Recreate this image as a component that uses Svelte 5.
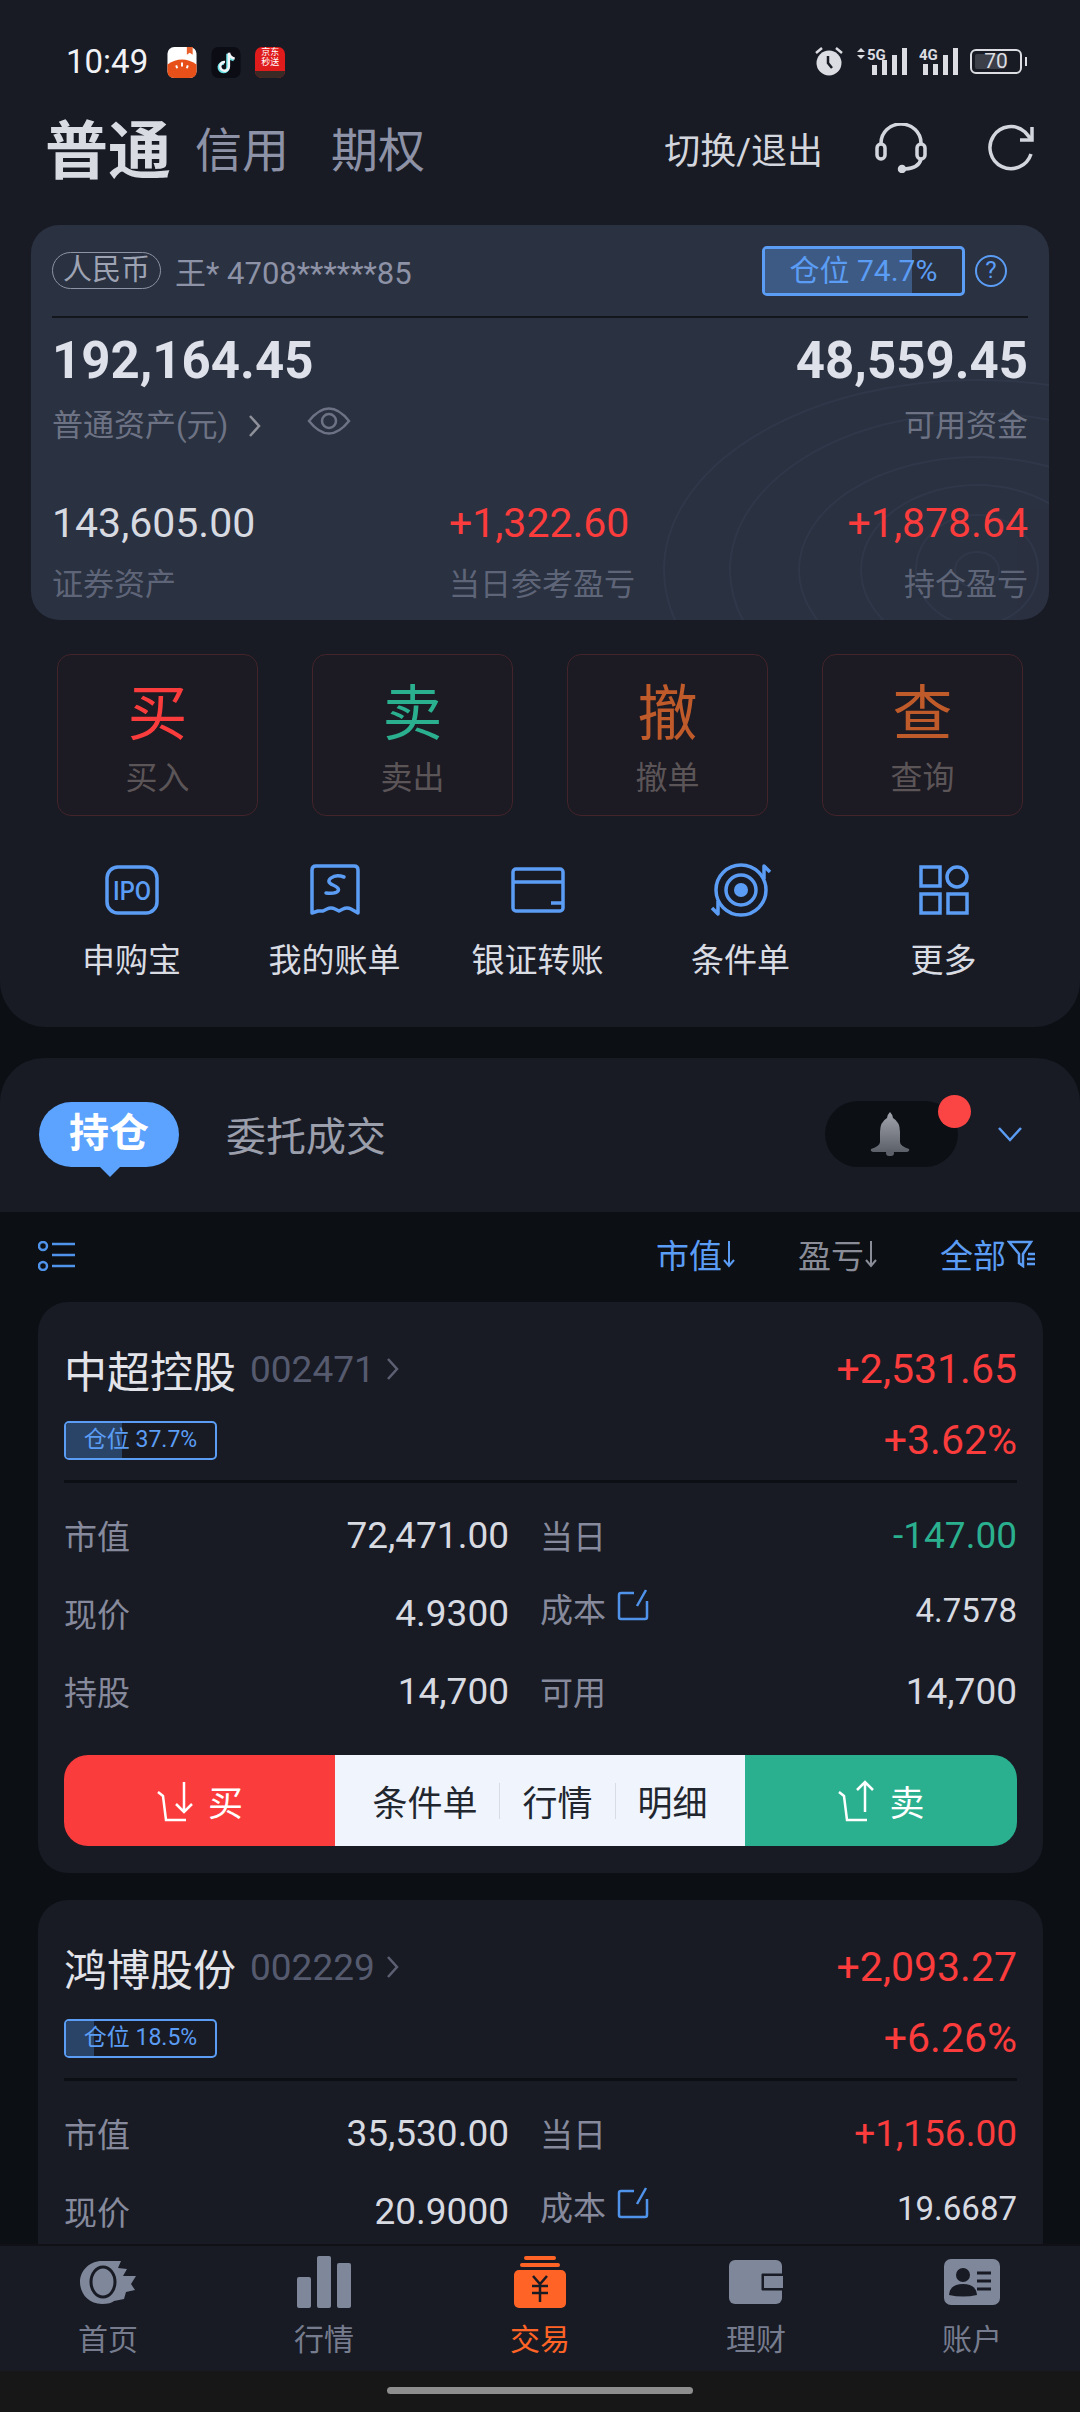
<script>
  const trades = [
    { big: '买', small: '买入', cls: 'buy' },
    { big: '卖', small: '卖出', cls: 'sell' },
    { big: '撤', small: '撤单', cls: 'undo' },
    { big: '查', small: '查询', cls: 'undo' }
  ];

  const shortcuts = ['申购宝', '我的账单', '银证转账', '条件单', '更多'];

  // the second card runs under the tab bar, so only its top rows are filled in
  const stocks = [
    {
      name: '中超控股', code: '002471', share: 37.7, profit: '+2,531.65', pct: '+3.62%',
      cap: '72,471.00', today: '-147.00', todayDown: true, price: '4.9300', cost: '4.7578', held: '14,700', free: '14,700'
    },
    {
      name: '鸿博股份', code: '002229', share: 18.5, profit: '+2,093.27', pct: '+6.26%',
      cap: '35,530.00', today: '+1,156.00', todayDown: false, price: '20.9000', cost: '19.6687'
    }
  ];

  const tabs = ['首页', '行情', '交易', '理财', '账户'];
</script>

<div class="page">
  <div class="scroll">
    <section class="top">
      <div class="status">
        <span class="time">10:49</span>
        <div class="apps">
          <svg width="30" height="31" viewBox="0 0 30 32">
            <rect width="30" height="32" rx="7" fill="#fff" />
            <path d="M20 0h6v8l-3-2-3 2z" fill="#e8602c" />
            <path d="M0 18q15-10 30 0v7q0 7-7 7H7q-7 0-7-7z" fill="#e8501a" />
            <path d="M15 16v4M9 19l1 3M21 19l-1 3" stroke="#fff" stroke-width="2" />
          </svg>
          <svg width="30" height="31" viewBox="0 0 30 32">
            <rect width="30" height="32" rx="7" fill="#0b0c14" />
            <path d="M17 7v14a4.500 4.500 0 1 1-4-4.500M17 7q1 5 6 6" fill="none" stroke="#6ce4e8" stroke-width="3.500" />
            <path d="M18 6v14a4.500 4.500 0 1 1-4-4.500M18 6q1 5 6 6" fill="none" stroke="#f4f4f6" stroke-width="2.500" />
          </svg>
          <div class="jd"><span>京东</span><span>秒送</span><i></i></div>
        </div>
        <div class="status-right">
          <svg width="32" height="30" viewBox="0 0 32 30">
            <circle cx="16" cy="17" r="12.500" fill="#dcdde2" />
            <path d="M15 10v7l4 5" fill="none" stroke="#181b24" stroke-width="2.500" />
            <path d="M3 7l6-5M29 7l-6-5" stroke="#dcdde2" stroke-width="2.500" />
          </svg>
          <svg width="52" height="30" viewBox="0 0 52 30" class="sig">
            <path d="M1 6l4-4 4 4zM1 9l4 4 4-4z" fill="#dcdde2" />
            <text x="11" y="14" font-size="15" font-weight="700" fill="#dcdde2">5G</text>
            <path d="M16 19h5v10h-5zM26 14h5v15h-5zM36 9h5v20h-5zM46 2h5v27h-5z" fill="#dcdde2" />
          </svg>
          <svg width="40" height="30" viewBox="0 0 40 30" class="sig">
            <text x="0" y="14" font-size="15" font-weight="700" fill="#dcdde2">4G</text>
            <path d="M4 18h5v11H4zM14 18h5v11h-5zM24 9h5v20h-5zM34 2h5v27h-5z" fill="#dcdde2" />
          </svg>
          <div class="battery"><b style="width: 62%"></b><span>70</span></div>
        </div>
      </div>

      <div class="nav">
        <span class="nav-main">普通</span>
        <span class="nav-sub">信用</span>
        <span class="nav-sub">期权</span>
        <span class="nav-switch">切换/退出</span>
        <svg class="headset" width="52" height="50" viewBox="0 0 52 50" fill="none" stroke="#d4d6de" stroke-width="3.500">
          <path d="M6 22V20a20 19 0 0 1 40 0v2" />
          <rect x="2" y="21" width="8" height="15" rx="4" />
          <rect x="42" y="21" width="8" height="15" rx="4" />
          <path d="M46 36q-2 9-16 10" />
          <circle cx="27" cy="46" r="2.500" fill="#d4d6de" />
        </svg>
        <svg width="48" height="48" viewBox="0 0 48 48" fill="none" stroke="#d4d6de" stroke-width="3.500">
          <path d="M44 30A21 21 0 1 1 38 8l6 7" />
          <path d="M45 3v13H33" />
        </svg>
      </div>

      <div class="account">
        <svg class="rings" width="1018" height="395" viewBox="0 0 1018 395" fill="none" stroke="#343e53" stroke-width="2">
          <ellipse cx="946" cy="345" rx="22" ry="18" />
          <ellipse cx="946" cy="345" rx="61" ry="55" />
          <ellipse cx="946" cy="345" rx="116" ry="85" />
          <ellipse cx="946" cy="345" rx="178" ry="113" />
          <ellipse cx="946" cy="345" rx="247" ry="157" />
          <ellipse cx="946" cy="345" rx="313" ry="190" />
        </svg>
        <div class="acct-head">
          <span class="rmb">人民币</span>
          <span class="acct-no">王* 4708******85</span>
          <div class="share-box"><b style="width: 74.7%"></b><span>仓位 74.7%</span></div>
          <span class="help">?</span>
        </div>
        <div class="acct-main">
          <div>
            <div class="big-num">192,164.45</div>
            <div class="acct-label with-icons">
              普通资产(元)
              <svg width="14" height="24" viewBox="0 0 14 24" fill="none" stroke="#8f919a" stroke-width="2.500"><path d="M2 2l9 10-9 10" /></svg>
              <svg class="eye" width="44" height="34" viewBox="0 0 44 34" fill="none" stroke="#6d7384" stroke-width="2.500">
                <path d="M2 17Q22-8 42 17 22 42 2 17z" />
                <circle cx="22" cy="17" r="7" />
              </svg>
            </div>
          </div>
          <div class="right">
            <div class="big-num">48,559.45</div>
            <div class="acct-label">可用资金</div>
          </div>
        </div>
        <div class="acct-sub">
          <div>
            <div class="mid-num">143,605.00</div>
            <div class="acct-label">证券资产</div>
          </div>
          <div>
            <div class="mid-num up">+1,322.60</div>
            <div class="acct-label">当日参考盈亏</div>
          </div>
          <div class="right">
            <div class="mid-num up">+1,878.64</div>
            <div class="acct-label">持仓盈亏</div>
          </div>
        </div>
      </div>

      <div class="trades">
        {#each trades as t}
          <div class="trade">
            <span class="trade-big {t.cls}">{t.big}</span>
            <span class="trade-small">{t.small}</span>
          </div>
        {/each}
      </div>

      <div class="shortcuts">
        {#each shortcuts as label, i}
          <div class="shortcut">
            <div class="shortcut-icon">
              {#if i === 0}
                <svg width="54" height="50" viewBox="0 0 54 50">
                  <rect x="2" y="2" width="50" height="46" rx="11" fill="none" stroke="#5b9df5" stroke-width="3.500" />
                  <text x="27" y="35" text-anchor="middle" font-size="26" font-weight="500" fill="#5b9df5" class="icon-text" textLength="38" lengthAdjust="spacingAndGlyphs">IPO</text>
                </svg>
              {:else if i === 1}
                <svg width="50" height="52" viewBox="0 0 50 52">
                  <path d="M2 49V6q0-4 4-4h38q4 0 4 4v43l-7-4q-4-2-8 0l-4 2-4-2q-4-2-8 0l-4 2-5 0z" fill="none" stroke="#5b9df5" stroke-width="3.500" stroke-linejoin="round" />
                  <path d="M34 13q-8-3-13 1t2 7 5 6-12 2" fill="none" stroke="#5b9df5" stroke-width="3.500" stroke-linecap="round" />
                </svg>
              {:else if i === 2}
                <svg width="54" height="46" viewBox="0 0 54 46" fill="none" stroke="#5b9df5" stroke-width="3.500">
                  <rect x="2" y="2" width="50" height="42" rx="3" />
                  <path d="M2 15h50M40 36h12" />
                </svg>
              {:else if i === 3}
                <svg width="62" height="54" viewBox="0 0 62 54" fill="none" stroke="#5b9df5" stroke-width="3.500">
                  <circle cx="31" cy="27" r="25" />
                  <circle cx="31" cy="27" r="15" />
                  <circle cx="31" cy="27" r="7" fill="#5b9df5" stroke="none" />
                  <path d="M54 16V3l6 6M8 38v13l-6-6" stroke-linejoin="round" />
                </svg>
              {:else}
                <svg width="50" height="50" viewBox="0 0 50 50" fill="none" stroke="#5b9df5" stroke-width="3.500">
                  <rect x="2" y="2" width="19" height="19" />
                  <circle cx="38" cy="12" r="10" />
                  <rect x="2" y="29" width="19" height="19" />
                  <rect x="29" y="29" width="19" height="19" />
                </svg>
              {/if}
            </div>
            <span>{label}</span>
          </div>
        {/each}
      </div>
    </section>

    <section class="holdings-head">
      <div class="pill">持仓</div>
      <span class="orders">委托成交</span>
      <div class="bell">
        <svg width="42" height="44" viewBox="0 0 42 44">
          <defs>
            <linearGradient id="bellfill" x1="0" y1="0" x2="0" y2="1">
              <stop offset="0" stop-color="#a2a5ad" />
              <stop offset="1" stop-color="#5c6069" />
            </linearGradient>
          </defs>
          <path d="M21 0q3 3 3 6 7 4 7 14v10q0 4 9 7 1 2-2 3H4q-3-1-2-3 9-3 9-7V20q0-10 7-14 0-3 3-6z" fill="url(#bellfill)" />
          <rect x="17" y="38" width="8" height="6" rx="3" fill="#5c6069" />
        </svg>
        <i></i>
      </div>
      <svg class="chev" width="26" height="16" viewBox="0 0 26 16" fill="none" stroke="#5b9df5" stroke-width="2.500"><path d="M2 2l11 12L24 2" /></svg>
    </section>

    <div class="toolbar">
      <svg class="list-icon" width="38" height="30" viewBox="0 0 38 30" fill="none" stroke="#4f93ea" stroke-width="2.500">
        <circle cx="5" cy="5" r="4" />
        <circle cx="5" cy="25" r="4" />
        <path d="M14 3h23M14 14h23M14 25h23" />
      </svg>
      <span class="sort blue first">市值<svg width="12" height="28" viewBox="0 0 12 28" fill="none" stroke="currentColor" stroke-width="2"><path d="M6 1v25M1 20l5 6 5-6" /></svg></span>
      <span class="sort">盈亏<svg width="12" height="28" viewBox="0 0 12 28" fill="none" stroke="currentColor" stroke-width="2"><path d="M6 1v25M1 20l5 6 5-6" /></svg></span>
      <span class="sort blue">全部<svg width="30" height="28" viewBox="0 0 30 28" fill="none" stroke="currentColor" stroke-width="2.500"><path d="M2 2h22l-8 12v12l-4-3v-9zM21 14h7M20 19h8M20 24h8" /></svg></span>
    </div>

    {#each stocks as s}
      <article class="stock">
        <div class="stock-top">
          <div class="stock-name">
            <span class="name">{s.name}</span>
            <span class="code">{s.code}</span>
            <svg width="14" height="24" viewBox="0 0 14 24" fill="none" stroke="#5c6072" stroke-width="2.500"><path d="M2 2l9 10-9 10" /></svg>
          </div>
          <span class="stock-pnl">{s.profit}</span>
        </div>
        <div class="stock-second">
          <div class="share-tag"><b style="width: {s.share}%"></b><span>仓位 {s.share}%</span></div>
          <span class="stock-pnl">{s.pct}</span>
        </div>
        <div class="stock-line"></div>
        <div class="stats">
          <div class="stat"><span>市值</span><strong>{s.cap}</strong></div>
          <div class="stat"><span>当日</span><strong class:down={s.todayDown} class:up={!s.todayDown}>{s.today}</strong></div>
          <div class="stat"><span>现价</span><strong>{s.price}</strong></div>
          <div class="stat cost">
            <span>成本
              <svg width="32" height="32" viewBox="0 0 32 32" fill="none" stroke="#4f93ea" stroke-width="2.500"><path d="M17 4H4q-2 0-2 2v22q0 2 2 2h24q2 0 2-2V12M29 1l-9 16" /></svg>
            </span>
            <strong>{s.cost}</strong>
          </div>
          {#if s.held}
            <div class="stat"><span>持股</span><strong>{s.held}</strong></div>
            <div class="stat"><span>可用</span><strong>{s.free}</strong></div>
          {/if}
        </div>
        {#if s.held}
          <div class="actions">
            <div class="act act-buy">
              <svg width="48" height="42" viewBox="0 0 48 42" fill="none" stroke="#fff" stroke-width="2.500"><path d="M2 12l5 4 3 24h20M28 2v30M20 24l8 8 8-8" /></svg>
              买
            </div>
            <div class="act-mid">
              <span>条件单</span><i></i><span>行情</span><i></i><span>明细</span>
            </div>
            <div class="act act-sell">
              <svg width="48" height="42" viewBox="0 0 48 42" fill="none" stroke="#fff" stroke-width="2.500"><path d="M2 12l5 4 3 24h20M28 32V2M20 10l8-8 8 8" /></svg>
              卖
            </div>
          </div>
        {/if}
      </article>
    {/each}
  </div>

  <nav class="tabs">
    {#each tabs as tab, i}
      <div class="tab" class:active={i === 2}>
        <div class="tab-icon">
          {#if i === 0}
            <svg width="56" height="44" viewBox="0 0 56 44">
              <path d="M22 1h19l-3 7 9 1-4 7h13l-5 8 4 6-9 2-2 7-10 2q-3 3-12 3C8 44 0 33 0 22S9 1 22 1z" fill="#7f879a" />
              <ellipse cx="23" cy="22" rx="12" ry="15" fill="#7f879a" stroke="#181b24" stroke-width="3" />
            </svg>
          {:else if i === 1}
            <svg width="54" height="52" viewBox="0 0 54 52" fill="#7f879a">
              <rect x="0" y="21" width="14" height="31" rx="2" />
              <rect x="20" y="0" width="14" height="52" rx="2" />
              <rect x="40" y="7" width="14" height="45" rx="2" />
            </svg>
          {:else if i === 2}
            <svg width="52" height="52" viewBox="0 0 52 52">
              <rect x="10" y="0" width="32" height="4" rx="2" fill="#ff6426" />
              <rect x="6" y="7" width="40" height="4" rx="2" fill="#ff6426" />
              <rect x="0" y="14" width="52" height="38" rx="5" fill="#ff6426" />
              <path d="M19 20l7 8 7-8M26 28v18M18 30h16M18 37h16" fill="none" stroke="#181b24" stroke-width="2.500" />
            </svg>
          {:else if i === 3}
            <svg width="54" height="44" viewBox="0 0 54 44">
              <rect x="0" y="0" width="53" height="44" rx="6" fill="#7f879a" />
              <path d="M54 14H33v16h21" fill="#181b24" stroke="#181b24" />
              <rect x="35" y="16" width="19" height="12" fill="#7f879a" />
            </svg>
          {:else}
            <svg width="56" height="46" viewBox="0 0 56 46">
              <rect width="56" height="46" rx="7" fill="#7f879a" />
              <circle cx="19" cy="16" r="7" fill="#181b24" />
              <path d="M5 36q1-11 14-11t14 11q-14 3-28 0z" fill="#181b24" />
              <path d="M33 14h14M33 22h14M33 30h14" stroke="#181b24" stroke-width="3" />
            </svg>
          {/if}
        </div>
        <span>{tab}</span>
      </div>
    {/each}
  </nav>
  <div class="home-bar"><i></i></div>
</div>

<style>
  :global(body) {
    background: #0c0f14;
  }

  .page {
    width: 1080px;
    height: 2412px;
    display: flex;
    flex-direction: column;
    overflow: hidden;
    background: #0c0f14;
    font-family: Roboto, "Noto Sans CJK SC", sans-serif;
    color: #d8dae2;
  }

  .scroll {
    flex: 1;
    min-height: 0;
    overflow: hidden;
  }

  .right {
    text-align: right;
  }

  .up {
    color: #fb3c3c;
  }

  .down {
    color: #2bb08f;
  }

  /* top panel */
  .top {
    height: 1027px;
    box-sizing: border-box;
    background: #181b24;
    border-radius: 0 0 46px 46px;
  }

  .status {
    height: 100px;
    padding: 42px 54px 0 66px;
    box-sizing: border-box;
    display: flex;
    align-items: flex-start;
  }

  .time {
    font-size: 33px;
    line-height: 36px;
    margin-top: 2px;
    color: #f1f2f5;
  }

  .apps {
    display: flex;
    gap: 14px;
    margin-left: 19px;
    margin-top: 5px;
  }

  .jd {
    width: 30px;
    height: 31px;
    border-radius: 7px;
    background: #e01b1b;
    color: #fff;
    font-size: 9px;
    line-height: 10px;
    text-align: center;
    overflow: hidden;
    position: relative;
  }

  .jd span {
    display: block;
  }

  .jd i {
    position: absolute;
    left: 0;
    right: 0;
    bottom: 0;
    height: 7px;
    background: #3a2a26;
  }

  .status-right {
    margin-left: auto;
    display: flex;
    align-items: center;
    gap: 11px;
    margin-top: 4px;
  }

  .sig text {
    font-family: Roboto, sans-serif;
  }

  .battery {
    width: 52px;
    height: 25px;
    box-sizing: border-box;
    border: 2px solid #dcdde2;
    border-radius: 6px;
    position: relative;
    margin-right: 4px;
  }

  .battery::after {
    content: "";
    position: absolute;
    right: -7px;
    top: 6px;
    width: 2px;
    height: 9px;
    background: #dcdde2;
  }

  .battery b {
    position: absolute;
    left: 3px;
    top: 3px;
    bottom: 3px;
    background: #3c3f48;
    border-radius: 2px;
  }

  .battery span {
    position: absolute;
    left: 0;
    right: 0;
    top: 0;
    text-align: center;
    font-size: 21px;
    line-height: 21px;
    color: #dcdde2;
  }

  .nav {
    height: 95px;
    padding: 0 45px;
    display: flex;
    align-items: center;
  }

  .nav-main {
    font-size: 63px;
    font-weight: 700;
    color: #d9dbe3;
    margin-right: 24px;
    margin-top: -4px;
  }

  .nav-sub {
    font-size: 47px;
    color: #8d92a6;
    margin-right: 42px;
    margin-top: -2px;
  }

  .nav-switch {
    margin-left: auto;
    font-size: 36px;
    color: #d4d6de;
  }

  .headset {
    margin: 0 60px 0 52px;
  }

  /* account card */
  .account {
    position: relative;
    overflow: hidden;
    margin: 30px 31px 0;
    height: 395px;
    padding: 0 21px;
    box-sizing: border-box;
    background: #2a3140;
    border-radius: 28px;
  }

  .rings {
    position: absolute;
    left: 0;
    top: 0;
    opacity: 0.5;
  }

  .acct-head {
    position: relative;
    height: 91px;
    display: flex;
    align-items: center;
    border-bottom: 2px solid #14161d;
  }

  .rmb {
    height: 37px;
    width: 109px;
    box-sizing: border-box;
    border: 1.500px solid #8e93a5;
    border-radius: 20px;
    font-size: 29px;
    line-height: 34px;
    text-align: center;
    color: #9ea3b4;
  }

  .acct-no {
    margin-left: 14px;
    font-size: 31px;
    color: #8d92a6;
  }

  .share-box {
    position: relative;
    margin-left: auto;
    width: 203px;
    height: 50px;
    box-sizing: border-box;
    border: 3px solid #5b9df5;
    border-radius: 5px;
    overflow: hidden;
    text-align: center;
    font-size: 30px;
    line-height: 44px;
    color: #5b9df5;
  }

  .share-box b,
  .share-tag b {
    position: absolute;
    left: 0;
    top: 0;
    bottom: 0;
    background: #3d5a84;
  }

  .share-box span,
  .share-tag span {
    position: relative;
  }

  .help {
    width: 32px;
    height: 32px;
    box-sizing: border-box;
    margin-left: 10px;
    margin-right: 21px;
    border: 2.500px solid #5b9df5;
    border-radius: 50%;
    font-size: 24px;
    line-height: 27px;
    text-align: center;
    color: #5b9df5;
  }

  .acct-main {
    position: relative;
    display: flex;
    justify-content: space-between;
    margin-top: 12px;
  }

  .big-num {
    font-size: 51px;
    font-weight: 700;
    line-height: 62px;
    color: #dfe1ea;
  }

  .acct-label {
    font-size: 31px;
    line-height: 44px;
    color: #5f6578;
    margin-top: 12px;
  }

  .acct-main .acct-label {
    color: #6d7384;
  }

  .with-icons {
    display: flex;
    align-items: center;
  }

  .with-icons svg:first-of-type {
    margin-left: 20px;
  }

  .eye {
    margin: -10px 0 0 45px;
  }

  .acct-sub {
    position: relative;
    display: grid;
    grid-template-columns: 397px 1fr auto;
    margin-top: 50px;
  }

  .mid-num {
    font-size: 41px;
    line-height: 50px;
    color: #d8dae2;
  }

  .mid-num.up {
    color: #fb3c3c;
  }

  .acct-sub .acct-label {
    margin-top: 15px;
  }

  /* trade buttons */
  .trades {
    display: flex;
    gap: 54px;
    margin: 34px 57px 0;
  }

  .trade {
    width: 201px;
    height: 162px;
    box-sizing: border-box;
    background: #1c1a22;
    border: 1.500px solid #43242b;
    border-radius: 14px;
    display: flex;
    flex-direction: column;
    align-items: center;
    padding-top: 24px;
  }

  .trade-big {
    font-size: 60px;
    line-height: 72px;
  }

  .trade-small {
    font-size: 32px;
    line-height: 44px;
    margin-top: 5px;
    color: #5b5558;
  }

  .buy {
    color: #fb3c3c;
  }

  .sell {
    color: #2bb08f;
  }

  .undo {
    color: #bf5a2a;
  }

  /* shortcuts */
  .shortcuts {
    display: grid;
    grid-template-columns: repeat(5, 203px);
    margin: 47px 0 0 30px;
  }

  .shortcut {
    display: flex;
    flex-direction: column;
    align-items: center;
    font-size: 33px;
    line-height: 46px;
    color: #dadce3;
  }

  .shortcut-icon {
    height: 54px;
    margin-bottom: 21px;
    display: flex;
    align-items: center;
  }

  .icon-text {
    font-family: Roboto, sans-serif;
  }

  /* holdings */
  .holdings-head {
    position: relative;
    height: 154px;
    margin-top: 31px;
    background: #181b24;
    border-radius: 44px 44px 0 0;
    display: flex;
    align-items: center;
  }

  .pill {
    position: relative;
    width: 140px;
    height: 65px;
    margin: -2px 0 0 39px;
    border-radius: 33px;
    background: #5ba3ff;
    color: #fff;
    font-size: 40px;
    font-weight: 700;
    line-height: 64px;
    text-align: center;
  }

  .pill::after {
    content: "";
    position: absolute;
    left: 60px;
    top: 64px;
    border: 11px solid transparent;
    border-top-color: #5ba3ff;
    border-bottom: 0;
  }

  .orders {
    margin: -2px 0 0 47px;
    font-size: 40px;
    color: #9b9eab;
  }

  .bell {
    position: relative;
    width: 133px;
    height: 66px;
    margin: -2px 0 0 auto;
    border-radius: 33px;
    background: #0c0f14;
    display: flex;
    align-items: center;
    justify-content: center;
  }

  .bell svg {
    margin-right: 4px;
  }

  .bell i {
    position: absolute;
    left: 113px;
    top: -6px;
    width: 33px;
    height: 33px;
    border-radius: 50%;
    background: #fb4444;
  }

  .chev {
    margin: -2px 57px 0 39px;
  }

  .toolbar {
    height: 84px;
    padding: 0 43px 0 38px;
    display: flex;
    align-items: center;
    font-size: 33px;
  }

  .list-icon {
    margin-top: 4px;
  }

  .sort {
    display: inline-flex;
    align-items: center;
    gap: 1px;
    margin-left: 63px;
    color: #8a8d98;
  }

  .sort.first {
    margin-left: auto;
  }

  .sort.blue {
    color: #5b9df5;
  }

  .stock {
    margin: 6px 37px 27px 38px;
    height: 571px;
    box-sizing: border-box;
    padding: 39px 26px 0;
    background: #181b24;
    border-radius: 30px;
  }

  .stock-top,
  .stock-second {
    display: flex;
    align-items: center;
    justify-content: space-between;
  }

  .stock-top {
    height: 56px;
  }

  .stock-second {
    height: 56px;
    margin-top: 15px;
  }

  .stock-name {
    display: flex;
    align-items: center;
  }

  .name {
    font-size: 43px;
    color: #e3e4ea;
  }

  .code {
    margin: 0 11px 0 14px;
    font-size: 37px;
    color: #555a6e;
  }

  .stock-pnl {
    font-size: 41px;
    color: #fb3c3c;
  }

  .share-tag {
    position: relative;
    width: 153px;
    height: 39px;
    box-sizing: border-box;
    border: 2.500px solid #5b9df5;
    border-radius: 5px;
    overflow: hidden;
    font-size: 23px;
    line-height: 34px;
    text-align: center;
    color: #5b9df5;
  }

  .share-tag b {
    background: #2a4468;
  }

  .stock-line {
    height: 3px;
    margin-top: 12px;
    background: #0c0f14;
  }

  .stats {
    display: grid;
    grid-template-columns: 445px 477px;
    column-gap: 31px;
    grid-auto-rows: 78px;
    margin-top: 13px;
  }

  .stat {
    display: flex;
    align-items: center;
    justify-content: space-between;
  }

  .stat span {
    font-size: 33px;
    color: #868a9c;
    display: flex;
    align-items: center;
    gap: 11px;
  }

  .stat strong {
    font-size: 37px;
    font-weight: 400;
    color: #d8dae2;
  }

  .stat strong.up {
    color: #fb3c3c;
  }

  .stat strong.down {
    color: #2bb08f;
  }

  .cost span {
    margin-top: -10px;
  }

  .cost svg {
    margin-top: -6px;
  }

  .cost strong {
    font-size: 33px;
    margin-top: -6px;
  }

  .actions {
    height: 91px;
    margin-top: 25px;
    display: grid;
    grid-template-columns: 271px 410px 1fr;
    border-radius: 24px;
    overflow: hidden;
    font-size: 35px;
  }

  .act {
    display: flex;
    align-items: center;
    justify-content: center;
    gap: 4px;
    color: #fff;
  }

  .act-buy {
    background: #fb3c3c;
  }

  .act-sell {
    background: #2bb08f;
  }

  .act-mid {
    background: #eff4fd;
    color: #22262e;
    display: flex;
    align-items: center;
    justify-content: center;
    gap: 22px;
  }

  .act-mid i {
    width: 1px;
    height: 36px;
    background: #d8dce4;
  }

  /* tab bar */
  .tabs {
    height: 127px;
    flex: none;
    background: #181b24;
    border-top: 2px solid #0f1117;
    box-sizing: border-box;
    display: grid;
    grid-template-columns: repeat(5, 216px);
  }

  .tab {
    display: flex;
    flex-direction: column;
    align-items: center;
    font-size: 30px;
    line-height: 40px;
    color: #767c8e;
  }

  .tab-icon {
    height: 56px;
    margin-top: 8px;
    margin-bottom: 10px;
    display: flex;
    align-items: center;
  }

  .tab.active {
    color: #ff6426;
  }

  .home-bar {
    height: 41px;
    flex: none;
    background: #171717;
    display: flex;
    justify-content: center;
    padding-top: 16px;
    box-sizing: border-box;
  }

  .home-bar i {
    width: 306px;
    height: 7px;
    border-radius: 4px;
    background: #8e8e8e;
  }
</style>
